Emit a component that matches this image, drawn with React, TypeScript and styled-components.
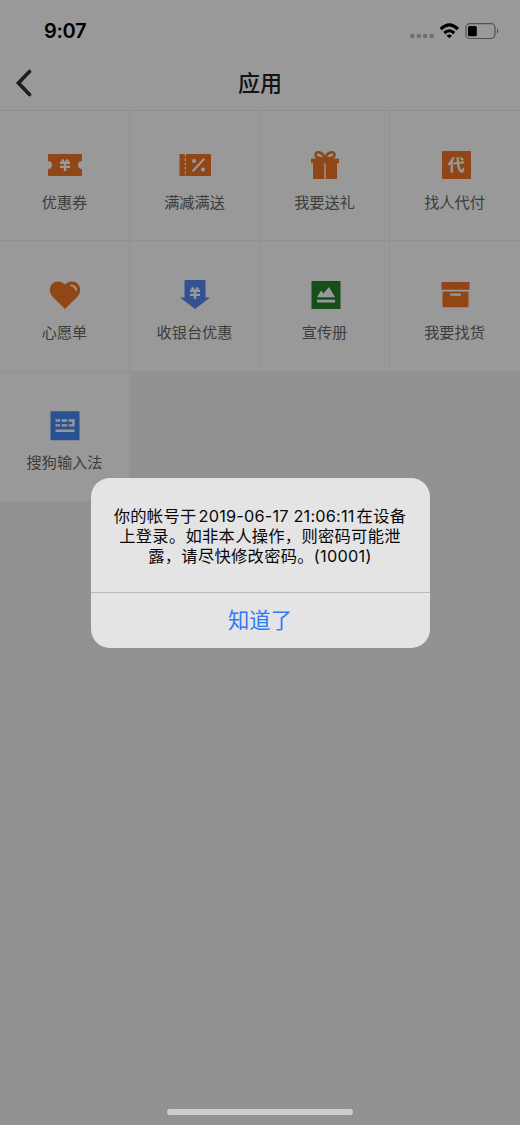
import React from 'react';
import styled, { createGlobalStyle } from 'styled-components';

const Global = createGlobalStyle`
  * { box-sizing: border-box; }
  body { margin: 0; background: #f3f3f3; font-family: Inter, "Noto Sans CJK SC", sans-serif; }
`;
const Screen = styled.main`
  position: relative;
  width: 520px;
  height: 1125px;
  overflow: hidden;
  background: #f3f3f3;
`;
const StatusBar = styled.header`
  height: 56px;
  padding: 6px 21px 0 44px;
  display: flex;
  align-items: center;
  justify-content: space-between;
  background: #fff;
`;
const Time = styled.span`
  font-size: 20px;
  font-weight: 600;
  letter-spacing: -0.35px;
  color: #000;
`;
const NavBar = styled.nav`
  height: 55px;
  display: grid;
  grid-template-columns: 60px 1fr 60px;
  align-items: center;
  background: #fff;
  border-bottom: 1px solid #eee;
`;
const BackButton = styled.button`
  border: 0;
  padding: 0 0 0 15px;
  height: 54px;
  background: none;
  display: flex;
  align-items: center;
`;
const Title = styled.h1`
  margin: 0;
  padding-bottom: 5px;
  text-align: center;
  font-family: "Noto Sans CJK SC", sans-serif;
  font-size: 22px;
  line-height: 32px;
  font-weight: 500;
  color: #222;
`;
const Grid = styled.section`
  display: grid;
  grid-template-columns: repeat(4, 130px);
  grid-auto-rows: 130.25px;
`;
const Cell = styled.div`
  display: flex;
  flex-direction: column;
  align-items: center;
  padding-top: 36px;
  background: #fff;
  border-right: 1px solid #f3f3f3;
  border-bottom: 1px solid #f3f3f3;
  &:nth-child(4n) { border-right-color: #fff; }
`;
const IconSlot = styled.svg`
  width: 36px;
  height: 36px;
  flex: none;
`;
const Label = styled.span`
  margin-top: 5.6px;
  font-family: "Noto Sans CJK SC", sans-serif;
  font-size: 15.2px;
  line-height: 24px;
  color: #666;
`;
const Shade = styled.div`
  position: absolute;
  inset: 0;
  display: flex;
  align-items: center;
  justify-content: center;
  background: rgba(0, 0, 0, 0.4);
`;
const Dialog = styled.div`
  width: 339px;
  height: 170px;
  border-radius: 19px;
  overflow: hidden;
  background: #e4e4e5;
`;
const Message = styled.p`
  margin: 0;
  height: 115px;
  padding-top: 28px;
  border-bottom: 1px solid #b9b9ba;
  text-align: center;
  font-size: 16.3px;
  line-height: 20.3px;
  color: #080808;
`;
const Line = styled.span`
  display: block;
  white-space: nowrap;
  letter-spacing: 0.28px;
`;
const Timestamp = styled.span`
  margin: 0 2px;
  letter-spacing: 0.2px;
`;
const Confirm = styled.button`
  display: block;
  width: 100%;
  height: 55px;
  padding: 0 0 3px;
  border: 0;
  background: none;
  font-family: "Noto Sans CJK SC", sans-serif;
  font-size: 21.3px;
  color: #2d7bf6;
`;
const HomeIndicator = styled.div`
  position: absolute;
  left: 167px;
  bottom: 10px;
  width: 186px;
  height: 6px;
  border-radius: 3px;
  background: #cdcdcd;
`;

const ORANGE = '#f07525';
const Yen = () => (
  <path d="M-3-5.6-1.4-3M3-5.6 1.4-3M-5-2.2H5M-5 1.9H5M0-2.5V6" fill="none" stroke="#fff" strokeWidth="2.4" />
);

// Each drawing is centred on the origin of a 36 by 36 view box.
const icons: Record<string, React.ReactNode> = {
  coupon: (
    <>
      <path d="M-16-11H16Q17-11 17-10V-4A4 4 0 0 0 17 4V10Q17 11 16 11H-16Q-17 11-17 10V4A4 4 0 0 0-17-4V-10Q-17-11-16-11Z" fill={ORANGE} />
      <Yen />
    </>
  ),
  discount: (
    <>
      <rect x="-15.5" y="-11" width="31.5" height="22" rx=".7" fill={ORANGE} />
      <path d="M-9.7-11V11" stroke="#fff" strokeWidth="1.2" strokeDasharray="2.6 1.7" />
      <path d="M-1.8 5.7 8.7-5.7" stroke="#fff" strokeWidth="2.2" strokeLinecap="round" />
      <circle cx="-1" cy="-4" r="2" fill="#fff" />
      <circle cx="8" cy="4.5" r="2" fill="#fff" />
    </>
  ),
  gift: (
    <>
      <path d="M0-7C-3-14-10-14-9.5-10C-9-7-4-6.5 0-7C3-14 10-14 9.5-10C9-7 4-6.5 0-7Z" fill="none" stroke={ORANGE} strokeWidth="2.6" />
      <path d="M-14-6.5H14V-1.8H-14ZM-12-2H-.7V14H-11Q-12 14-12 13ZM.7-2H12V13Q12 14 11 14H.7Z" fill={ORANGE} />
    </>
  ),
  pay: (
    <>
      <rect x="-13" y="-14" width="29" height="28" rx="1" fill={ORANGE} />
      <text x="1.2" y="6" textAnchor="middle" fontFamily='"Noto Sans CJK SC", sans-serif' fontWeight="700" fontSize="17" fill="#fff">代</text>
    </>
  ),
  heart: (
    <>
      <path d="M0 14L-12.6 1.5C-17.5-4-15-13-7.6-13.5C-4-13.7-1.5-12 0-10.5C1.5-12 4-13.7 7.6-13.5C15-13 17.5-4 12.6 1.5Z" fill={ORANGE} />
      <path d="M6.2-9.4Q10.6-9 11.2-5" fill="none" stroke="#fff" strokeWidth="1.9" strokeLinecap="round" />
    </>
  ),
  cashier: (
    <>
      <path d="M-9.5-15H9.5Q10.5-15 10.5-14V2.5H15L0 14-15 2.5H-10.5V-14Q-10.5-15-9.5-15Z" fill="#5a87f2" />
      <g transform="translate(0 -2)"><Yen /></g>
    </>
  ),
  brochure: (
    <>
      <rect x="-13.5" y="-14" width="29" height="28" rx=".6" fill="#27832a" />
      <path d="M-8 2.3-4-4.4-1.5-1.5 4-8 10 2.3ZM-8 4.8H10V7.4H-8Z" fill="#fff" />
    </>
  ),
  box: (
    <>
      <path d="M-13.5-13H14.5V-5.3H-13.5ZM-12.5-3.5H13.5V11.2Q13.5 12.2 12.5 12.2H-11.5Q-12.5 12.2-12.5 11.2Z" fill={ORANGE} />
      <path d="M-4-.4H5" stroke="#fff" strokeWidth="2.2" strokeLinecap="round" />
    </>
  ),
  keyboard: (
    <>
      <rect x="-14.5" y="-14.8" width="29" height="29" rx=".4" fill="#4689f5" />
      <path d="M-9.5-5.5H-5M-3.5-5.5H2M3.5-5.5H8.5V-.6H3.5M-9.5-.6H-5M-3.5-.6H2M-9.5 4.7H9.5" fill="none" stroke="#fff" strokeWidth="2.4" />
    </>
  ),
};

const apps = [
  ['coupon', '优惠券'], ['discount', '满减满送'], ['gift', '我要送礼'], ['pay', '找人代付'],
  ['heart', '心愿单'], ['cashier', '收银台优惠'], ['brochure', '宣传册'], ['box', '我要找货'],
  ['keyboard', '搜狗输入法'],
];

export default function App() {
  return (
    <>
      <Global />
      <Screen>
        <StatusBar>
          <Time>9:07</Time>
          <svg width="89" height="20" viewBox="410 21 89 20">
            <g fill="#bababa">
              {[412.2, 418.7, 425, 431.5].map((x) => <rect key={x} x={x - 2.1} y="33.8" width="4.3" height="4.3" rx="1.6" />)}
            </g>
            <g fill="none" stroke="#000" strokeWidth="3">
              <path d="M440.7 29.1Q449.3 20.8 457.9 29.1" />
              <path d="M444.3 33Q449.3 28.6 454.3 33" />
            </g>
            <path d="M446.5 35.4Q449.3 33.4 452.1 35.4L449.3 38.2Z" />
            <rect x="466" y="23.7" width="29" height="14.8" rx="4" fill="none" stroke="#888" strokeWidth="1.2" />
            <rect x="468" y="25.9" width="8.8" height="10.4" rx="1.6" />
            <path d="M497 28.3Q499.5 31 497 33.8Z" fill="#777" />
          </svg>
        </StatusBar>
        <NavBar>
          <BackButton aria-label="返回">
            <svg width="18" height="28" viewBox="0 0 18 28">
              <path d="M14.5 2.5 3.5 14 14.5 25.5" fill="none" stroke="#333" strokeWidth="3.7" strokeLinecap="round" />
            </svg>
          </BackButton>
          <Title>应用</Title>
        </NavBar>
        <Grid>
          {apps.map(([icon, name]) => (
            <Cell key={name}>
              <IconSlot viewBox="-18 -18 36 36">{icons[icon]}</IconSlot>
              <Label>{name}</Label>
            </Cell>
          ))}
        </Grid>
        <Shade>
          <Dialog role="alertdialog">
            <Message>
              <Line>你的帐号于<Timestamp>2019-06-17 21:06:11</Timestamp>在设备</Line>
              <Line>上登录。如非本人操作，则密码可能泄</Line>
              <Line>露，请尽快修改密码。(10001)</Line>
            </Message>
            <Confirm>知道了</Confirm>
          </Dialog>
        </Shade>
        <HomeIndicator />
      </Screen>
    </>
  );
}
